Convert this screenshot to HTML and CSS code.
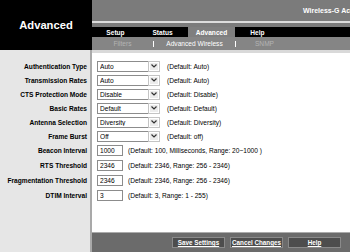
FILE: index.html
```html
<!DOCTYPE html>
<html lang="en">
<head>
    <meta charset="UTF-8">
    <meta name="viewport" content="width=device-width, initial-scale=1.0">
    <title>Advanced Wireless</title>
    <link rel="stylesheet" href="styles.css">
</head>
<body>
    <div class="top">
        <div class="brand">Advanced</div>
        <div class="nav">
            <div class="product">Wireless-G Access Point</div>
            <div class="nav-rule"></div>
            <ul class="tabs">
                <li class="t-setup">Setup</li>
                <li class="t-status">Status</li>
                <li class="t-adv on">Advanced</li>
                <li class="t-help">Help</li>
            </ul>
            <ul class="subtabs">
                <li class="s-filters off">Filters</li>
                <li class="sep"></li>
                <li class="s-wireless">Advanced Wireless</li>
                <li class="sep"></li>
                <li class="s-snmp off">SNMP</li>
            </ul>
        </div>
    </div>

    <div class="main">
        <div class="labels">
            <div class="row">Authentication Type</div>
            <div class="row">Transmission Rates</div>
            <div class="row">CTS Protection Mode</div>
            <div class="row">Basic Rates</div>
            <div class="row">Antenna Selection</div>
            <div class="row">Frame Burst</div>
            <div class="row tall">Beacon Interval</div>
            <div class="row tall">RTS Threshold</div>
            <div class="row tall">Fragmentation Threshold</div>
            <div class="row tall">DTIM Interval</div>
        </div>

        <div class="panel">
            <div class="strip"></div>
            <div class="fields">
                <div class="row">
                    <div class="combo"><select><option>Auto</option></select><span class="arrow"><svg width="6" height="4" viewBox="0 0 6 4"><path d="M0.5 0.5 L3 3 L5.5 0.5" fill="none" stroke="#333" stroke-width="1.2"/></svg></span></div>
                    <span class="hint">(Default: Auto)</span>
                </div>
                <div class="row">
                    <div class="combo"><select><option>Auto</option></select><span class="arrow"><svg width="6" height="4" viewBox="0 0 6 4"><path d="M0.5 0.5 L3 3 L5.5 0.5" fill="none" stroke="#333" stroke-width="1.2"/></svg></span></div>
                    <span class="hint">(Default: Auto)</span>
                </div>
                <div class="row">
                    <div class="combo"><select><option>Disable</option></select><span class="arrow"><svg width="6" height="4" viewBox="0 0 6 4"><path d="M0.5 0.5 L3 3 L5.5 0.5" fill="none" stroke="#333" stroke-width="1.2"/></svg></span></div>
                    <span class="hint">(Default: Disable)</span>
                </div>
                <div class="row">
                    <div class="combo"><select><option>Default</option></select><span class="arrow"><svg width="6" height="4" viewBox="0 0 6 4"><path d="M0.5 0.5 L3 3 L5.5 0.5" fill="none" stroke="#333" stroke-width="1.2"/></svg></span></div>
                    <span class="hint">(Default: Default)</span>
                </div>
                <div class="row">
                    <div class="combo"><select><option>Diversity</option></select><span class="arrow"><svg width="6" height="4" viewBox="0 0 6 4"><path d="M0.5 0.5 L3 3 L5.5 0.5" fill="none" stroke="#333" stroke-width="1.2"/></svg></span></div>
                    <span class="hint">(Default: Diversity)</span>
                </div>
                <div class="row">
                    <div class="combo"><select><option>Off</option></select><span class="arrow"><svg width="6" height="4" viewBox="0 0 6 4"><path d="M0.5 0.5 L3 3 L5.5 0.5" fill="none" stroke="#333" stroke-width="1.2"/></svg></span></div>
                    <span class="hint">(Default: off)</span>
                </div>
                <div class="row tall">
                    <input type="text" value="1000">
                    <span class="hint">(Default: 100, Milliseconds, Range: 20~1000 )</span>
                </div>
                <div class="row tall">
                    <input type="text" value="2346">
                    <span class="hint">(Default: 2346, Range: 256 - 2346)</span>
                </div>
                <div class="row tall">
                    <input type="text" value="2346">
                    <span class="hint">(Default: 2346, Range: 256 - 2346)</span>
                </div>
                <div class="row tall">
                    <input type="text" value="3">
                    <span class="hint">(Default: 3, Range: 1 - 255)</span>
                </div>
            </div>
            <div class="actions">
                <a class="btn" href="#">Save Settings</a>
                <a class="btn" href="#">Cancel Changes</a>
                <a class="btn" href="#">Help</a>
            </div>
        </div>
    </div>
</body>
</html>
```

FILE: styles.css
```css
* {
    box-sizing: border-box;
    margin: 0;
    padding: 0;
}
html,
body {
    width: 350px;
    height: 252px;
    overflow: hidden;
}
body {
    font-family: "Liberation Sans", Arial, sans-serif;
    font-size: 6.6px;
    color: #000;
    background: #fff;
}
ul {
    list-style: none;
}

/* header */
.top {
    display: flex;
    height: 50px;
}
.brand {
    width: 92px;
    background: #000;
    color: #fff;
    font-size: 11.2px;
    font-weight: bold;
    display: flex;
    align-items: center;
    justify-content: center;
}
.nav {
    flex: 1;
    min-width: 0;
    display: flex;
    flex-direction: column;
    background: #7b7b7b;
    overflow: hidden;
}
.product {
    height: 21px;
    padding-left: 211px;
    display: flex;
    align-items: center;
    color: #fff;
    font-weight: bold;
    font-size: 7px;
    white-space: nowrap;
    overflow: hidden;
}
.nav-rule {
    height: 2px;
    background: #dcdcdc;
    margin-bottom: 4px;
}
.tabs {
    display: flex;
    height: 10px;
    background: #000;
    color: #fff;
    font-weight: bold;
}
.tabs li {
    display: flex;
    align-items: center;
    justify-content: center;
}
.t-setup { width: 47px; }
.t-status { width: 47px; }
.t-adv { width: 47px; margin-left: 2px; }
.t-help { width: 45px; }
.tabs .on {
    background: #7f7f7f;
}
.subtabs {
    display: flex;
    align-items: center;
    height: 13px;
    background: #858585;
    color: #fff;
}
.subtabs li {
    text-align: center;
}
.subtabs .off {
    color: #b4b4b4;
}
.s-filters { width: 61px; }
.s-wireless { width: 81px; }
.s-snmp { width: 57px; }
.subtabs .sep {
    width: 1px;
    height: 6px;
    background: #fff;
}

/* body */
.main {
    display: flex;
    height: 202px;
}
.labels {
    width: 92px;
    background: #e6e6e6;
    border-right: 2px solid #a9a9a9;
    padding-top: 9px;
    font-weight: bold;
}
.labels .row {
    justify-content: flex-end;
    padding-right: 3px;
    white-space: nowrap;
}
.row {
    display: flex;
    align-items: center;
    height: 14px;
}
.row.tall {
    height: 15px;
}
.panel {
    flex: 1;
    display: flex;
    flex-direction: column;
}
.strip {
    height: 3px;
    background: #d9d9d9;
}
.fields {
    padding-top: 6px;
    padding-left: 5px;
}
.combo {
    display: flex;
    width: 63px;
    height: 11px;
    border: 1px solid #8c8c8c;
    background: #fff;
}
.combo select {
    flex: 1;
    min-width: 0;
    appearance: none;
    -webkit-appearance: none;
    border: none;
    background: #fff;
    font: inherit;
    padding-left: 2px;
    color: #000;
    outline: none;
}
.arrow {
    width: 10px;
    background: #ececec;
    border: 1px solid #fff;
    outline: 1px solid #c4c4c4;
    display: flex;
    align-items: center;
    justify-content: center;
}
.fields input[type="text"] {
    width: 26px;
    height: 11px;
    border: 1px solid #8c8c8c;
    font: inherit;
    padding-left: 2px;
    color: #000;
}
.hint {
    margin-left: 7px;
    white-space: nowrap;
}
.tall .hint {
    margin-left: 5px;
}

/* buttons */
.actions {
    margin-top: auto;
    height: 20px;
    background: #6b6b6b;
    border-top: 1px solid #ababab;
    display: flex;
    justify-content: flex-end;
    align-items: flex-start;
    gap: 5px;
    padding: 4px 9px 0 0;
}
.btn {
    width: 53px;
    height: 11px;
    background: #4d4d4d;
    border: 1px solid #8a8a8a;
    color: #fff;
    font-size: 6.3px;
    font-weight: bold;
    text-decoration: underline;
    white-space: nowrap;
    display: flex;
    align-items: center;
    justify-content: center;
}
```
